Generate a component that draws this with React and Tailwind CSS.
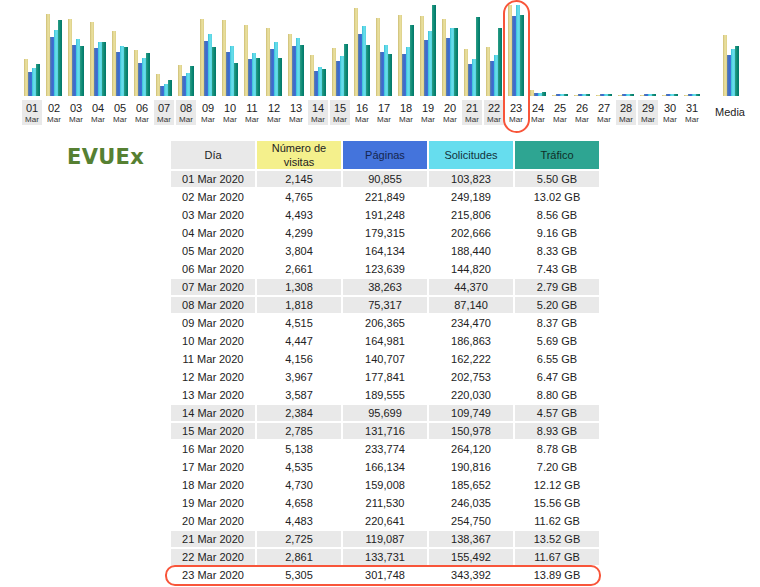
const rows = [
  ["01", "2,145", "90,855", "103,823", "5.50 GB"],
  ["02", "4,765", "221,849", "249,189", "13.02 GB"],
  ["03", "4,493", "191,248", "215,806", "8.56 GB"],
  ["04", "4,299", "179,315", "202,666", "9.16 GB"],
  ["05", "3,804", "164,134", "188,440", "8.33 GB"],
  ["06", "2,661", "123,639", "144,820", "7.43 GB"],
  ["07", "1,308", "38,263", "44,370", "2.79 GB"],
  ["08", "1,818", "75,317", "87,140", "5.20 GB"],
  ["09", "4,515", "206,365", "234,470", "8.37 GB"],
  ["10", "4,447", "164,981", "186,863", "5.69 GB"],
  ["11", "4,156", "140,707", "162,222", "6.55 GB"],
  ["12", "3,967", "177,841", "202,753", "6.47 GB"],
  ["13", "3,587", "189,555", "220,030", "8.80 GB"],
  ["14", "2,384", "95,699", "109,749", "4.57 GB"],
  ["15", "2,785", "131,716", "150,978", "8.93 GB"],
  ["16", "5,138", "233,774", "264,120", "8.78 GB"],
  ["17", "4,535", "166,134", "190,816", "7.20 GB"],
  ["18", "4,730", "159,008", "185,652", "12.12 GB"],
  ["19", "4,658", "211,530", "246,035", "15.56 GB"],
  ["20", "4,483", "220,641", "254,750", "11.62 GB"],
  ["21", "2,725", "119,087", "138,367", "13.52 GB"],
  ["22", "2,861", "133,731", "155,492", "11.67 GB"],
  ["23", "5,305", "301,748", "343,392", "13.89 GB"],
];
const weekend = ["01", "07", "08", "14", "15", "21", "22", "28", "29"];
const num = (s) => parseFloat(s.replace(/,/g, ""));
const heights = (r) => [
  Math.round((num(r[1]) / 5305) * 91),
  Math.round((num(r[2]) / 301748) * 80),
  Math.round((num(r[3]) / 343392) * 91),
  Math.round(num(r[4]) * 5.85),
];
const extra = {
  24: [6, 3, 3, 4],
  25: [1, 2, 2, 2],
  26: [1, 2, 2, 2],
  27: [1, 2, 2, 2],
  28: [1, 2, 2, 2],
  29: [1, 2, 2, 2],
  30: [1, 2, 2, 2],
  31: [1, 2, 2, 2],
};
const days = Array.from({ length: 31 }, (_, i) => {
  const d = String(i + 1).padStart(2, "0");
  const r = rows[i];
  return { d, h: r ? heights(r) : extra[i + 1] };
});
const barClasses = [
  "bg-linear-to-r from-[#cdbd74] via-[#ece3a2] to-[#dccf88]",
  "bg-linear-to-r from-[#6683a8] via-[#3b68c8] to-[#3f74dc]",
  "bg-linear-to-r from-[#35bfd8] via-[#6be0ec] to-[#55d2e2]",
  "bg-linear-to-r from-[#2c9d88] via-[#0a8a74] to-[#04766a]",
];

function Bars({ h }) {
  return (
    <div className="flex items-end h-[96px] w-[16px]">
      {h.map((v, i) => (
        <div key={i} className={`w-[4px] ${barClasses[i]}`} style={{ height: v }} />
      ))}
    </div>
  );
}

export default function App() {
  return (
    <div className="relative w-[760px] h-[587px] bg-white overflow-hidden text-[#222] font-['Liberation_Sans',Arial,sans-serif]">
      <div className="flex pl-[22px]">
        {days.map((x) => (
          <div key={x.d} className="w-[20px] mr-[2px] flex flex-col items-center">
            <Bars h={x.h} />
            <div
              className={`mt-[4px] w-[20px] h-[25px] flex flex-col items-center ${
                weekend.includes(x.d) ? "bg-[#e9e9e9]" : ""
              }`}
            >
              <span className="text-[11px] leading-[13px] mt-[2px]">{x.d}</span>
              <span className="text-[8px] leading-[9px] text-[#333]">Mar</span>
            </div>
          </div>
        ))}
        <div className="ml-[12px] w-[30px] flex flex-col items-center">
          <Bars h={[61, 41, 47, 50]} />
          <div className="mt-[10px] -ml-[2px] text-[11px] leading-[13px]">Media</div>
        </div>
      </div>

      <div className="flex mt-[14px]">
        <div className="w-[169px] pl-[67px] pt-[5px]">
          <span className="block w-[77px] font-['DejaVu_Sans',sans-serif] font-bold text-[21px] tracking-[0.3px] leading-[26px] text-[#568032] whitespace-nowrap">
            EVUEx
          </span>
        </div>
        <table className="table-fixed w-[432px] border-separate border-spacing-[2px] text-[11px] leading-[14px] text-center">
          <thead>
            <tr>
              <th className="w-[84px] h-[28px] p-0 font-normal bg-[#e9e9e9]">Día</th>
              <th className="w-[84px] h-[28px] p-0 font-normal bg-[#f4f08c]">
                Número de
                <br />
                visitas
              </th>
              <th className="w-[84px] h-[28px] p-0 font-normal bg-[#4474dc] text-[#14264e]">Páginas</th>
              <th className="w-[84px] h-[28px] p-0 font-normal bg-[#66ddee] text-[#14323c]">Solicitudes</th>
              <th className="w-[84px] h-[28px] p-0 font-normal bg-[#2ea592] text-[#0e2e28]">Tráfico</th>
            </tr>
          </thead>
          <tbody>
            {rows.map((r) => {
              const bg = weekend.includes(r[0]) ? "bg-[#e9e9e9]" : "";
              return (
                <tr key={r[0]}>
                  <td className={`h-[16px] p-0 ${bg}`}>{r[0]} Mar 2020</td>
                  <td className={`h-[16px] p-0 ${bg}`}>{r[1]}</td>
                  <td className={`h-[16px] p-0 ${bg}`}>{r[2]}</td>
                  <td className={`h-[16px] p-0 ${bg}`}>{r[3]}</td>
                  <td className={`h-[16px] p-0 ${bg}`}>{r[4]}</td>
                </tr>
              );
            })}
          </tbody>
        </table>
      </div>

      <div className="absolute left-[503px] top-0 w-[27px] h-[133px] border-2 border-[#f8553a] rounded-[14px] pointer-events-none" />
      <div className="absolute left-[165px] top-[565px] w-[436px] h-[21px] border-2 border-[#f8553a] rounded-[10px] pointer-events-none" />
    </div>
  );
}
